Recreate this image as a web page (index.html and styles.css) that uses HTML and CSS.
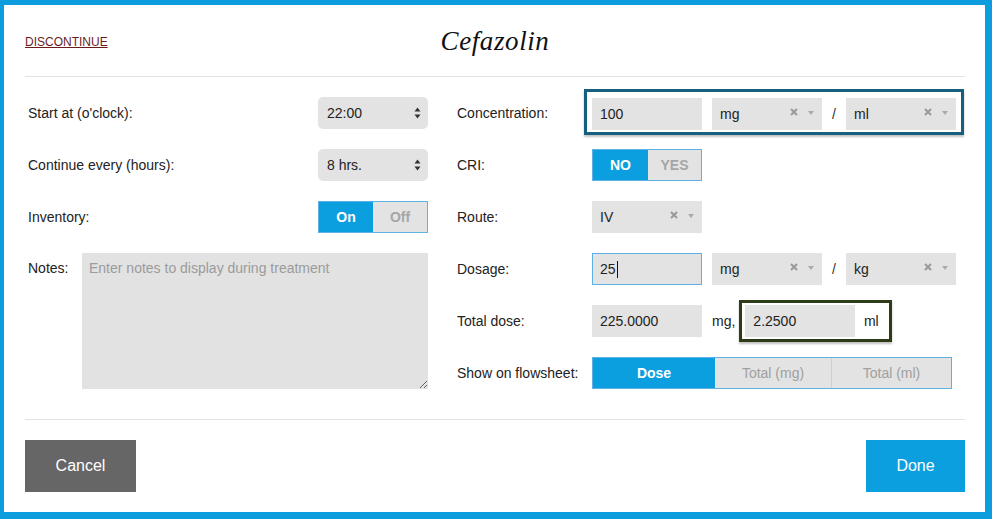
FILE: index.html
```html
<!DOCTYPE html>
<html>
<head>
<meta charset="utf-8">
<link rel="stylesheet" href="styles.css">
</head>
<body>
<div class="modal">
  <header class="head">
    <a class="discontinue" href="#">DISCONTINUE</a>
    <h1 class="title">Cefazolin</h1>
    <span></span>
  </header>

  <main class="body">
    <section class="col col-left">
      <div class="row">
        <span class="lbl">Start at (o'clock):</span>
        <div class="field sel-native"><span>22:00</span>
          <svg class="updown" width="7" height="12" viewBox="0 0 7 12"><path d="M3.5 0.5 L6.5 4.5 L0.5 4.5 Z M3.5 11.5 L6.5 7.5 L0.5 7.5 Z" fill="#333"/></svg>
        </div>
      </div>
      <div class="row">
        <span class="lbl">Continue every (hours):</span>
        <div class="field sel-native"><span>8 hrs.</span>
          <svg class="updown" width="7" height="12" viewBox="0 0 7 12"><path d="M3.5 0.5 L6.5 4.5 L0.5 4.5 Z M3.5 11.5 L6.5 7.5 L0.5 7.5 Z" fill="#333"/></svg>
        </div>
      </div>
      <div class="row">
        <span class="lbl">Inventory:</span>
        <div class="toggle">
          <span class="tg tg-on tg-w55">On</span><span class="tg tg-off tg-w55">Off</span>
        </div>
      </div>
      <div class="row row-notes">
        <span class="lbl lbl-notes">Notes:</span>
        <textarea class="notes" placeholder="Enter notes to display during treatment"></textarea>
      </div>
    </section>

    <section class="col col-right">
      <div class="row">
        <span class="lbl lbl-r">Concentration:</span>
        <div class="hl-teal">
          <div class="field input"><span>100</span></div>
          <div class="field sel"><span>mg</span>
            <svg class="clr" width="8" height="8" viewBox="0 0 8 8"><path d="M1 1 L7 7 M7 1 L1 7" stroke="#999" stroke-width="2"/></svg>
            <svg class="dd" width="6" height="4" viewBox="0 0 6 4"><path d="M0 0 L6 0 L3 4 Z" fill="#aaa"/></svg>
          </div>
          <span class="slash">/</span>
          <div class="field sel"><span>ml</span>
            <svg class="clr" width="8" height="8" viewBox="0 0 8 8"><path d="M1 1 L7 7 M7 1 L1 7" stroke="#999" stroke-width="2"/></svg>
            <svg class="dd" width="6" height="4" viewBox="0 0 6 4"><path d="M0 0 L6 0 L3 4 Z" fill="#aaa"/></svg>
          </div>
        </div>
      </div>
      <div class="row">
        <span class="lbl lbl-r">CRI:</span>
        <div class="toggle">
          <span class="tg tg-on tg-w56">NO</span><span class="tg tg-off tg-w54">YES</span>
        </div>
      </div>
      <div class="row">
        <span class="lbl lbl-r">Route:</span>
        <div class="field sel"><span>IV</span>
          <svg class="clr" width="8" height="8" viewBox="0 0 8 8"><path d="M1 1 L7 7 M7 1 L1 7" stroke="#999" stroke-width="2"/></svg>
          <svg class="dd" width="6" height="4" viewBox="0 0 6 4"><path d="M0 0 L6 0 L3 4 Z" fill="#aaa"/></svg>
        </div>
      </div>
      <div class="row">
        <span class="lbl lbl-r">Dosage:</span>
        <div class="group">
          <div class="field input input-focus"><span>25</span><span class="caret"></span></div>
          <div class="field sel"><span>mg</span>
            <svg class="clr" width="8" height="8" viewBox="0 0 8 8"><path d="M1 1 L7 7 M7 1 L1 7" stroke="#999" stroke-width="2"/></svg>
            <svg class="dd" width="6" height="4" viewBox="0 0 6 4"><path d="M0 0 L6 0 L3 4 Z" fill="#aaa"/></svg>
          </div>
          <span class="slash">/</span>
          <div class="field sel"><span>kg</span>
            <svg class="clr" width="8" height="8" viewBox="0 0 8 8"><path d="M1 1 L7 7 M7 1 L1 7" stroke="#999" stroke-width="2"/></svg>
            <svg class="dd" width="6" height="4" viewBox="0 0 6 4"><path d="M0 0 L6 0 L3 4 Z" fill="#aaa"/></svg>
          </div>
        </div>
      </div>
      <div class="row">
        <span class="lbl lbl-r">Total dose:</span>
        <div class="group">
          <div class="field input"><span>225.0000</span></div>
          <span class="unit">mg,</span>
          <div class="hl-green">
            <div class="field input"><span>2.2500</span></div>
            <span class="ml">ml</span>
          </div>
        </div>
      </div>
      <div class="row">
        <span class="lbl lbl-r">Show on flowsheet:</span>
        <div class="seg">
          <span class="sg sg-on sg-dose">Dose</span><span class="sg sg-mg">Total (mg)</span><span class="sg sg-ml">Total (ml)</span>
        </div>
      </div>
    </section>
  </main>

  <footer class="foot">
    <button class="btn btn-cancel">Cancel</button>
    <button class="btn btn-done">Done</button>
  </footer>
</div>
</body>
</html>
```

FILE: styles.css
```css
* { box-sizing: border-box; }

html, body {
  margin: 0;
  padding: 0;
  background: #0d9ddf;
}

body {
  font-family: "Liberation Sans", Arial, sans-serif;
  font-size: 14px;
  color: #222;
}

.modal {
  width: 992px;
  height: 519px;
  background: #fff;
  border-style: solid;
  border-color: #0d9ddf;
  border-width: 5px 7px 7px 4px;
  padding: 0 20px 0 21px;
  display: flex;
  flex-direction: column;
}

/* header */
.head {
  height: 72px;
  display: grid;
  grid-template-columns: 1fr auto 1fr;
  align-items: center;
  border-bottom: 1px solid #e2e2e2;
  padding-top: 2px;
}

.discontinue {
  font-size: 12px;
  color: #6b1d1d;
  text-decoration: underline;
  justify-self: start;
}

.title {
  margin: 0;
  font-family: "Liberation Serif", "Times New Roman", serif;
  font-style: italic;
  font-weight: normal;
  font-size: 27px;
  letter-spacing: 0.6px;
  color: #111;
}

/* body */
.body {
  height: 343px;
  display: flex;
  gap: 29px;
  padding-top: 20px;
  border-bottom: 1px solid #e2e2e2;
}

.col-left { width: 403px; flex: none; }
.col-right { flex: 1; min-width: 0; }

.row {
  display: flex;
  align-items: center;
  height: 32px;
  margin-bottom: 20px;
}

.col-left .row { justify-content: space-between; }

.lbl { padding-left: 3px; }
.lbl-r { padding-left: 0; width: 135px; flex: none; }

.row-notes {
  align-items: flex-start;
  height: 136px;
}
.lbl-notes { padding-top: 7px; line-height: 16px; }

.notes {
  width: 346px;
  height: 136px;
  border: none;
  background: #e2e2e2;
  padding: 7px 7px;
  font-family: "Liberation Sans", Arial, sans-serif;
  font-size: 14px;
  line-height: 16px;
  color: #333;
  outline: none;
  flex: none;
}
.notes::placeholder { color: #9b9b9b; }

/* fields */
.field {
  width: 110px;
  height: 32px;
  background: #e3e3e3;
  display: flex;
  align-items: center;
  padding-left: 8px;
  color: #222;
  flex: none;
}

.sel-native {
  border-radius: 5px;
  padding-left: 9px;
  padding-right: 7px;
  justify-content: space-between;
}

.sel { padding-right: 8px; }
.sel .clr { margin-left: auto; margin-top: -4px; }
.sel .dd { margin-left: 10px; margin-top: -2px; }

.input-focus { border: 1px solid #5eb1e4; padding-left: 7px; }
.caret {
  display: inline-block;
  width: 1px;
  height: 17px;
  background: #111;
  margin-left: 1px;
}

.group, .hl-teal {
  display: flex;
  align-items: center;
}

.hl-teal {
  border: 3px solid #16607d;
  padding: 6px 5px 2px 5px;
  margin: -4px 0 -1px -8px;
  box-shadow: 0 2px 2px rgba(0, 0, 0, 0.25);
  gap: 10px;
}
.group { gap: 10px; }

.slash {
  width: 14px;
  margin: 0 -5px;
  text-align: center;
  color: #333;
}

.unit { margin-right: -6px; }

.hl-green {
  display: flex;
  align-items: center;
  border: 3px solid #2c3c17;
  padding: 2px 2px 2px 3px;
  box-shadow: 0 2px 2px rgba(0, 0, 0, 0.25);
  background: #fff;
}
.ml {
  width: 32px;
  text-align: center;
}

/* toggles */
.toggle {
  display: flex;
  height: 32px;
  border: 1px solid #5eb1e4;
  flex: none;
}
.tg {
  display: flex;
  align-items: center;
  justify-content: center;
  font-weight: bold;
}
.tg-w55 { width: 54px; }
.tg-w56 { width: 55px; }
.tg-w54 { width: 53px; }
.tg-on { background: #0b9fe0; color: #fff; }
.tg-off { background: #e3e3e3; color: #a6a6a6; }

/* segmented */
.seg {
  display: flex;
  height: 32px;
  border: 1px solid #5eb1e4;
}
.sg {
  display: flex;
  align-items: center;
  justify-content: center;
  background: #e3e3e3;
  color: #a0a0a0;
}
.sg-dose { width: 122px; }
.sg-mg { width: 117px; border-right: 1px solid #cfcfcf; }
.sg-ml { width: 119px; }
.sg-on { background: #0b9fe0; color: #fff; font-weight: bold; }

/* footer */
.foot {
  display: flex;
  justify-content: space-between;
  padding-top: 20px;
}

.btn {
  height: 52px;
  border: none;
  color: #fff;
  font-family: "Liberation Sans", Arial, sans-serif;
  font-size: 16px;
  padding: 0;
}
.btn-cancel { width: 111px; background: #666; }
.btn-done { width: 99px; background: #0b9fe0; }
```
